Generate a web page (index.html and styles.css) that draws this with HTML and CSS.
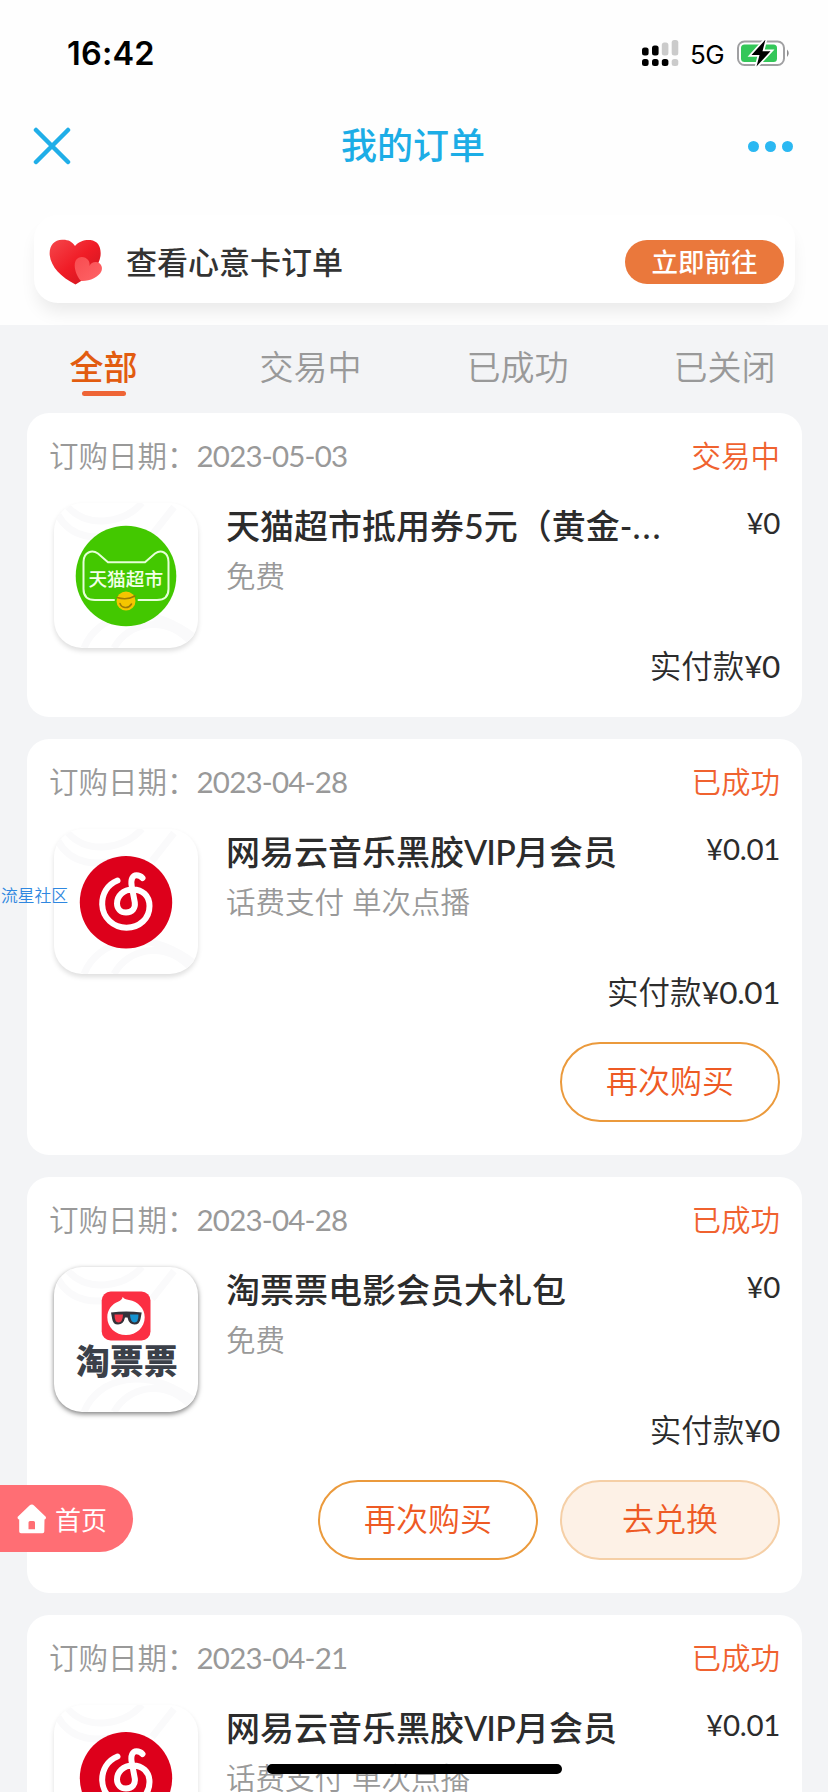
FILE: index.html
```html
<!DOCTYPE html>
<html lang="zh-CN">
<head>
<meta charset="utf-8">
<title>我的订单</title>
<link rel="stylesheet" href="styles.css">
</head>
<body>
<svg class="defs" width="0" height="0" aria-hidden="true">
  <symbol id="stripes" viewBox="0 0 144 145">
    <g fill="none" stroke="#fafafb" stroke-width="7">
      <path d="M4 12C16 34 42 40 72 28"/>
      <path d="M14 4C34 26 70 20 88 0M98 32 120 4"/>
      <path d="M30 145C44 110 92 98 140 134"/>
      <path d="M60 145C74 120 110 110 138 140"/>
    </g>
  </symbol>
  <symbol id="netease" viewBox="0 0 144 145">
    <use href="#stripes"/>
    <circle cx="72" cy="73.2" r="46.2" fill="#dd001b"/>
    <path fill="none" stroke="#fff" stroke-width="6" stroke-linecap="round" d="M63.5 51.5C53 55.500 47.900 65.500 48.200 75.500C48.700 89 59.500 98.700 72.500 98.700C85.500 98.700 95.500 89.500 95.500 77C95.500 66.500 88 60.500 79 60.500C69 60.500 63 67 63 74.500C63 80 67 83.500 72 83.500C78.500 83.500 81.500 79 80.800 73.500L77.700 57C76.500 50.500 78.500 46.300 82.500 46.300C85.500 46.300 87 47.300 88.500 49"/>
  </symbol>
</svg>

<div class="screen">
  <div class="statusbar">
    <span class="time">16:42</span>
    <div class="indicators">
      <svg width="37" height="27" viewBox="0 0 37 27">
        <g fill="#000"><rect x="0" y="7.500" width="6.600" height="8" rx="2.500"/><rect x="10" y="5.500" width="6.600" height="10" rx="2.500"/><rect x="0" y="19" width="6.600" height="7" rx="2.500"/><rect x="10" y="19" width="6.600" height="7" rx="2.500"/><rect x="19.800" y="19" width="6.600" height="7" rx="2.500"/></g>
        <g fill="#cbcbcb"><rect x="19.800" y="2.500" width="6.600" height="13" rx="2.500"/><rect x="29.700" y="0" width="6.600" height="15.500" rx="2.500"/><rect x="29.700" y="19" width="6.600" height="7" rx="2.500"/></g>
      </svg>
      <span class="network">5G</span>
      <svg width="54" height="27" viewBox="0 0 54 27">
        <rect x="1" y="1.500" width="46" height="23.500" rx="6.500" fill="#fff" stroke="#a0a0a2" stroke-width="2"/>
        <rect x="4" y="4.500" width="36" height="17.500" rx="3.500" fill="#34c759"/>
        <path d="M50 9.500Q53.500 13.200 50 17Z" fill="#8c8c8e"/>
        <path d="M28.500-.5 14.500 15H22.500L19.500 26.500 33.500 11.200H25.500Z" fill="#000" stroke="#fff" stroke-width="3.500" paint-order="stroke"/>
      </svg>
    </div>
  </div>

  <div class="navbar">
    <svg width="38" height="38" viewBox="0 0 38 38"><path d="M3 3 35 35M35 3 3 35" stroke="#20aee8" stroke-width="4.500" stroke-linecap="round"/></svg>
    <h1 class="nav-title">我的订单</h1>
    <div class="more"><i></i><i></i><i></i></div>
  </div>

  <div class="banner">
    <svg width="54" height="46" viewBox="0 0 54 46">
      <defs>
        <linearGradient id="hg" x1="0" y1="0" x2="1" y2="1"><stop offset="0" stop-color="#f5474c"/><stop offset=".5" stop-color="#f01c26"/><stop offset="1" stop-color="#c9151f"/></linearGradient>
        <linearGradient id="hs" x1="0" y1="0" x2="1" y2="1"><stop offset="0" stop-color="#f84c50"/><stop offset="1" stop-color="#ff6467"/></linearGradient>
      </defs>
      <path fill="url(#hg)" d="M26 7C30 2 36 .5 41.500 1C49 2 52.500 8 51.500 17C50 28 40 38 26.500 45.500C12 38 2 28 .7 16C0 7 5 1 13 .8C19 .5 23 2.500 26 7Z"/>
      <path fill="url(#hs)" d="M39.500 21.500C36 17 30 17 27 21C24.500 25 26 32 28.500 37C30 40 31.500 42 33.500 42C41 42 50 38 52.500 32C54 28 52 24 47.500 23C44.500 22.700 41.500 24 40.500 27C40.800 25 40.500 23 39.500 21.500Z"/>
    </svg>
    <span class="banner-text">查看心意卡订单</span>
    <button class="go">立即前往</button>
  </div>

  <nav class="tabs">
    <a class="tab active">全部</a>
    <a class="tab">交易中</a>
    <a class="tab">已成功</a>
    <a class="tab">已关闭</a>
  </nav>

  <main class="orders">
    <section class="order">
      <header class="order-head"><span class="date">订购日期：<b>2023-05-03</b></span><span class="status">交易中</span></header>
      <div class="order-body">
        <svg class="logo" viewBox="0 0 144 145">
          <use href="#stripes"/>
          <circle cx="72" cy="73" r="50.300" fill="#43c800"/>
          <path fill="none" stroke="#e6ffd8" stroke-width="2" stroke-linecap="round" d="M60 97H41Q29.500 97 29.500 86V59C29.500 49 38 46.500 44 50.500L54 59.300H91L101 50.500C107 46.500 114.500 49 114.500 59V86Q114.500 97 103 97H84.500"/>
          <text x="71.800" y="82.500" class="tmall-text">天猫超市</text>
          <circle cx="72" cy="98" r="9.500" fill="#f4c500"/>
          <path fill="none" stroke="#9c7a05" stroke-width="1.500" stroke-linecap="round" d="M63 94.500Q73 97.500 81 93M66 100.500Q67 104 71 104.500T77.500 101"/>
        </svg>
        <div class="info"><h2 class="name">天猫超市抵用券5元（黄金-<span class="dots">...</span></h2><p class="sub">免费</p></div>
        <span class="price">¥0</span>
      </div>
      <div class="paid">实付款<b>¥0</b></div>
    </section>

    <section class="order">
      <header class="order-head"><span class="date">订购日期：<b>2023-04-28</b></span><span class="status">已成功</span></header>
      <div class="order-body">
        <svg class="logo" viewBox="0 0 144 145"><use href="#netease"/></svg>
        <div class="info"><h2 class="name">网易云音乐黑胶<span class="latin">VIP</span>月会员</h2><p class="sub">话费支付 单次点播</p></div>
        <span class="price">¥0.01</span>
      </div>
      <div class="paid">实付款<b>¥0.01</b></div>
      <div class="actions"><button class="btn">再次购买</button></div>
    </section>

    <section class="order">
      <header class="order-head"><span class="date">订购日期：<b>2023-04-28</b></span><span class="status">已成功</span></header>
      <div class="order-body">
        <svg class="logo strong" viewBox="0 0 144 145">
          <use href="#stripes"/>
          <rect x="47.700" y="24.500" width="48.800" height="49" rx="9" fill="#fb2f43"/>
          <path fill="#fff" d="M68.700 29.800C69.500 32 72 32.500 75 33C84 34.500 90.700 41.500 90.700 50.200C90.700 60.300 82.500 68 72 68S53.300 60.300 53.300 50.200C53.300 43 58 37 64 34.800C67 33.500 68.500 32 68.700 29.800Z"/>
          <path fill="#34323a" d="M57 45.500Q72 43.500 87.700 45.500L86.500 52Q85.500 57.500 80.500 57.500Q75 57.500 73.500 50.500H71Q69.500 57.500 64 57.500Q59 57.500 58.200 52Z"/>
          <path fill="#f23548" d="M60.500 47.500H69Q68.500 55.500 64.500 55.500Q60.500 55.500 60.500 47.500Z"/>
          <path fill="#1592d0" d="M76 47.500H84.500Q84.500 55.500 80.500 55.500Q76.500 55.500 76 47.500Z"/>
          <text x="72.700" y="107" class="tpp-text">淘票票</text>
        </svg>
        <div class="info"><h2 class="name">淘票票电影会员大礼包</h2><p class="sub">免费</p></div>
        <span class="price">¥0</span>
      </div>
      <div class="paid">实付款<b>¥0</b></div>
      <div class="actions"><button class="btn">再次购买</button><button class="btn filled">去兑换</button></div>
    </section>

    <section class="order">
      <header class="order-head"><span class="date">订购日期：<b>2023-04-21</b></span><span class="status">已成功</span></header>
      <div class="order-body">
        <svg class="logo" viewBox="0 0 144 145"><use href="#netease"/></svg>
        <div class="info"><h2 class="name">网易云音乐黑胶<span class="latin">VIP</span>月会员</h2><p class="sub">话费支付 单次点播</p></div>
        <span class="price">¥0.01</span>
      </div>
    </section>
  </main>

  <div class="community">流星社区</div>
  <a class="home-btn">
    <svg width="30" height="30" viewBox="0 0 30 30"><path fill="#fff" fill-rule="evenodd" d="M15 .5Q16 .5 17 1.500L29 13Q29 15.500 27.500 15.500L27.300 27.500Q27.300 29.300 25.500 29.300H4Q2.200 29.300 2.200 27.500V15.500Q.5 15.500 .5 13L12.500 1.500Q13.500 .5 15 .5ZM13 17Q11.500 17 11.500 18.500V25.300H18V18.500Q18 17 16.500 17Z"/></svg>
    <span>首页</span>
  </a>
  <div class="home-indicator"></div>
</div>
</body>
</html>
```
FILE: styles.css
```css
* { box-sizing: border-box; }

body {
  margin: 0;
  background: #f3f4f6;
  font-family: Lato, "Noto Sans CJK SC", sans-serif;
}

.defs { position: absolute; }

.screen {
  position: relative;
  width: 828px;
  height: 1792px;
  overflow: hidden;
  background: linear-gradient(#fefefe 325px, #f3f4f6 325px);
}

button { font-family: inherit; padding: 0; }
b { font-weight: 400; }

/* Status bar */
.statusbar {
  display: flex;
  justify-content: space-between;
  align-items: center;
  height: 104px;
  padding: 3px 37px 0 67px;
}

.time {
  font: 600 32.5px/40px Inter, sans-serif;
  letter-spacing: 0.2px;
}

.indicators {
  display: flex;
  align-items: center;
}

.network {
  width: 37px;
  margin: 2px 10px 0 11px;
  font: 400 26px/30px Inter, sans-serif;
  letter-spacing: -0.5px;
}

/* Navigation */
.navbar {
  display: grid;
  grid-template-columns: 90px 1fr 90px;
  align-items: center;
  height: 84px;
  padding: 0 35px 0 33px;
}

.nav-title {
  margin: 0 0 2px;
  color: #1cade6;
  font-size: 36px;
  font-weight: 500;
  line-height: 50px;
  text-align: center;
}

.more {
  display: flex;
  justify-content: flex-end;
  gap: 6px;
}

.more i {
  width: 11px;
  height: 11px;
  border-radius: 50%;
  background: #2bb8f2;
}

/* Gift card banner */
.banner {
  display: flex;
  align-items: center;
  height: 88px;
  margin: 27px 33px 22px 34px;
  padding: 5px 11px 0 15px;
  border-radius: 24px;
  background: #fff;
  box-shadow: 0 12px 18px -4px rgba(0, 0, 0, 0.085);
}

.banner-text {
  flex: 1;
  margin-left: 23px;
  color: #333;
  font-size: 31px;
  font-weight: 500;
  line-height: 44px;
}

.go {
  width: 159px;
  height: 44px;
  border: 0;
  border-radius: 22px;
  background: #ea783c;
  color: #fff;
  font-size: 26.5px;
  font-weight: 500;
  line-height: 44px;
}

/* Tabs */
.tabs {
  display: grid;
  grid-template-columns: repeat(4, 1fr);
  height: 88px;
}

.tab {
  display: flex;
  flex-direction: column;
  align-items: center;
  height: 72px;
  padding-top: 18px;
  color: #999;
  font-size: 34px;
  font-weight: 350;
  line-height: 48px;
}

.tab.active {
  color: #e25c10;
  font-weight: 500;
}

.tab.active::after {
  content: "";
  width: 44px;
  height: 5px;
  border-radius: 3px;
  background: #ee6436;
}

/* Orders */
.orders {
  display: flex;
  flex-direction: column;
  gap: 22px;
  padding: 0 26px 0 27px;
}

.order {
  flex: none;
  padding: 0 22px 33px;
  border-radius: 22px;
  background: #fff;
  color: #2c2c2c;
  font-weight: 350;
}

.order-head {
  display: flex;
  justify-content: space-between;
  height: 90px;
  font-size: 29.5px;
  line-height: 85px;
}

.date { color: #999; }
.date b { letter-spacing: -0.8px; }
.status { color: #f0622f; }

.order-body {
  display: flex;
  height: 145px;
  padding-left: 5px;
}

.logo {
  flex: none;
  width: 144px;
  height: 145px;
  border-radius: 28px;
  background: #fff;
  box-shadow: 0 3px 5px rgba(0, 0, 0, 0.13);
}

.logo.strong { box-shadow: 0 2px 5px rgba(0, 0, 0, 0.5); }

.tmall-text {
  fill: #f2ffe9;
  font: 500 18.7px "Noto Sans CJK SC", sans-serif;
  text-anchor: middle;
}

.tpp-text {
  fill: #3b4049;
  font: 900 34px "Noto Sans CJK SC", sans-serif;
  text-anchor: middle;
}

.info {
  flex: 1;
  padding-left: 28px;
}

.name {
  height: 46px;
  margin: 0;
  font-size: 34px;
  font-weight: 500;
  line-height: 45px;
  white-space: nowrap;
}

.latin { letter-spacing: -0.8px; }
.dots { letter-spacing: 2px; }

.sub {
  height: 40px;
  margin: 7px 0 0;
  color: #999;
  font-size: 29.5px;
  line-height: 40px;
  white-space: nowrap;
}

.price {
  font-size: 29.5px;
  font-weight: 400;
  line-height: 40px;
  letter-spacing: -0.3px;
}

.paid {
  height: 68px;
  font-size: 31.5px;
  line-height: 36px;
  text-align: right;
}

.paid b { letter-spacing: -0.4px; }

.order:first-child .paid { height: 36px; }

.actions {
  display: flex;
  justify-content: flex-end;
  gap: 22px;
}

.btn {
  width: 220px;
  height: 80px;
  border: 2px solid #eb9a3c;
  border-radius: 40px;
  background: #fff;
  color: #ee5a24;
  font-size: 32px;
  font-weight: 350;
  line-height: 70px;
  padding-bottom: 3px;
}

.btn.filled {
  border-color: #f5cfa6;
  background: #fdf1e6;
}

/* Floating layers */
.community {
  position: absolute;
  left: 1px;
  top: 883px;
  color: #2f87e0;
  font-size: 16.8px;
  font-weight: 350;
  line-height: 25px;
}

.home-btn {
  position: absolute;
  left: 0;
  top: 1485px;
  display: flex;
  align-items: center;
  gap: 8px;
  width: 133px;
  height: 67px;
  padding-left: 17px;
  border-radius: 0 34px 34px 0;
  background: rgba(255, 101, 107, 0.94);
  color: #fff;
  font-size: 26px;
}

.home-indicator {
  position: absolute;
  left: 267px;
  top: 1764px;
  width: 295px;
  height: 10px;
  border-radius: 5px;
  background: #000;
}
```
